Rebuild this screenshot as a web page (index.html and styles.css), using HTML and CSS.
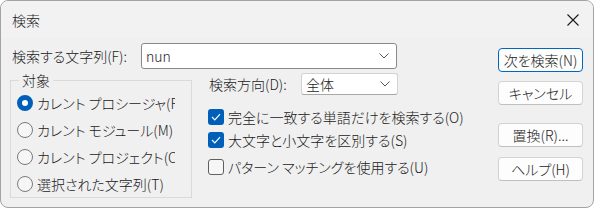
FILE: index.html
```html
<!DOCTYPE html>
<html lang="ja">
<head>
<meta charset="utf-8">
<title>検索</title>
<link rel="stylesheet" href="styles.css">
</head>
<body>
<div class="window">
  <div class="titlebar">
    <span class="title">検索</span>
    <span class="close">
      <svg width="12" height="12" viewBox="0 0 12 12"><path d="M0.5 0.5 L11.5 11.5 M11.5 0.5 L0.5 11.5" stroke="#1a1a1a" stroke-width="1.1" fill="none"/></svg>
    </span>
  </div>
  <div class="content">
    <div class="left">
      <div class="find-row">
        <span class="find-label">検索する文字列(F):</span>
        <div class="combo edit">
          <span class="combo-text">nun</span>
          <svg class="chev" width="10" height="6" viewBox="0 0 10 6"><path d="M0.5 0.5 L5 5 L9.5 0.5" stroke="#555" stroke-width="1" fill="none"/></svg>
        </div>
      </div>
      <div class="lower">
        <fieldset class="group">
          <legend>対象</legend>
          <div class="radio-row"><span class="radio on"></span><span class="radio-label">カレント プロシージャ(P)</span></div>
          <div class="radio-row"><span class="radio"></span><span class="radio-label">カレント モジュール(M)</span></div>
          <div class="radio-row"><span class="radio"></span><span class="radio-label">カレント プロジェクト(C)</span></div>
          <div class="radio-row"><span class="radio"></span><span class="radio-label">選択された文字列(T)</span></div>
        </fieldset>
        <div class="options">
          <div class="dir-row">
            <span class="dir-label">検索方向(D):</span>
            <div class="combo list">
              <span class="combo-text">全体</span>
              <svg class="chev" width="10" height="6" viewBox="0 0 10 6"><path d="M0.5 0.5 L5 5 L9.5 0.5" stroke="#555" stroke-width="1" fill="none"/></svg>
            </div>
          </div>
          <div class="check-row c1"><span class="check on"><svg width="10" height="8" viewBox="0 0 10 8"><path d="M1 4 L3.8 6.8 L9 1.2" stroke="#fff" stroke-width="1.2" fill="none"/></svg></span><span>完全に一致する単語だけを検索する(O)</span></div>
          <div class="check-row c2"><span class="check on"><svg width="10" height="8" viewBox="0 0 10 8"><path d="M1 4 L3.8 6.8 L9 1.2" stroke="#fff" stroke-width="1.2" fill="none"/></svg></span><span>大文字と小文字を区別する(S)</span></div>
          <div class="check-row c3"><span class="check"></span><span>パターン マッチングを使用する(U)</span></div>
        </div>
      </div>
    </div>
    <div class="buttons">
      <div class="btn default b1">次を検索(N)</div>
      <div class="btn b2">キャンセル</div>
      <div class="btn b3">置換(R)...</div>
      <div class="btn b4">ヘルプ(H)</div>
    </div>
  </div>
</div>
</body>
</html>
```
FILE: styles.css
```css
html, body {
  margin: 0;
  padding: 0;
  background: #ffffff;
}
body {
  font-family: "Noto Sans CJK JP", "Noto Sans", sans-serif;
  font-size: 14px;
  font-weight: 300;
  font-feature-settings: "palt";
  color: #1a1a1a;
}
.window {
  width: 594px;
  height: 208px;
  box-sizing: border-box;
  border: 1px solid #a3a3a3;
  border-radius: 8px;
  background: #f0f0f0;
  overflow: hidden;
}
.titlebar {
  height: 37px;
  display: flex;
  align-items: center;
  justify-content: space-between;
  background: #f2f2f2;
  padding: 0 14px 0 11px;
}
.title {
  line-height: 18px;
  padding-top: 1px;
}
.close {
  display: flex;
  width: 12px;
  height: 12px;
  padding-top: 1px;
}
.content {
  display: flex;
  padding-left: 9px;
}
.left {
  width: 387px;
  flex: none;
}
.find-row {
  display: flex;
  align-items: center;
  margin-top: 5px;
  height: 26px;
}
.find-label {
  width: 129px;
  padding-left: 2px;
  line-height: 18px;
  flex: none;
}
.combo {
  box-sizing: border-box;
  display: flex;
  align-items: center;
  justify-content: space-between;
  background: #ffffff;
  flex: none;
}
.combo.edit {
  width: 256px;
  height: 26px;
  border: 1px solid #8a8a8a;
  border-radius: 3px;
  padding: 0 7px 0 4px;
}
.combo.list {
  width: 97px;
  height: 22px;
  border: 1px solid #d2d2d2;
  border-bottom-color: #a8a8a8;
  border-radius: 3px;
  padding: 0 7px 0 4px;
}
.combo-text {
  line-height: 18px;
}
.chev {
  display: block;
}
.lower {
  display: flex;
  margin-top: 2px;
}
.group {
  box-sizing: border-box;
  width: 182px;
  flex: none;
  margin: 0;
  padding: 0 0 0 6px;
  border: 1px solid #dadada;
  min-width: 0;
}
.group legend {
  margin-left: 2px;
  padding: 0 3px;
  line-height: 18px;
}
.radio-row {
  display: flex;
  align-items: center;
  height: 27px;
}
.radio {
  box-sizing: border-box;
  width: 16px;
  height: 16px;
  border-radius: 50%;
  border: 1px solid #7a7a7a;
  background: #f6f6f6;
  flex: none;
}
.radio.on {
  border: 5px solid #005fb8;
  background: #ffffff;
}
.radio-label {
  margin-left: 4px;
  width: 138px;
  white-space: nowrap;
  overflow: hidden;
  line-height: 18px;
}
.options {
  margin-left: 16px;
  padding-top: 2px;
  white-space: nowrap;
}
.dir-row {
  display: flex;
  align-items: center;
  height: 22px;
}
.dir-label {
  width: 92px;
  padding-left: 1px;
  line-height: 18px;
  flex: none;
}
.check-row {
  display: flex;
  align-items: center;
  height: 16px;
  line-height: 18px;
}
.check-row.c1 { margin-top: 14px; }
.check-row.c2 { margin-top: 7px; }
.check-row.c3 { margin-top: 11px; }
.check {
  box-sizing: border-box;
  width: 16px;
  height: 16px;
  border-radius: 3px;
  border: 1px solid #5f5f5f;
  background: #f6f6f6;
  margin-right: 4px;
  display: flex;
  align-items: center;
  justify-content: center;
  flex: none;
}
.check.on {
  border: none;
  background: #005fb8;
}
.buttons {
  margin-left: 101px;
  display: flex;
  flex-direction: column;
  flex: none;
}
.btn {
  box-sizing: border-box;
  width: 85px;
  height: 24px;
  border: 1px solid #d3d3d3;
  border-bottom-color: #c0c0c0;
  border-radius: 4px;
  background: #fdfdfd;
  display: flex;
  align-items: center;
  justify-content: center;
  line-height: 18px;
}
.btn.default {
  border: 1px solid #0067c0;
}
.b1 { margin-top: 10px; }
.b2 { margin-top: 9px; }
.b3 { margin-top: 18px; }
.b4 { margin-top: 10px; }
```
